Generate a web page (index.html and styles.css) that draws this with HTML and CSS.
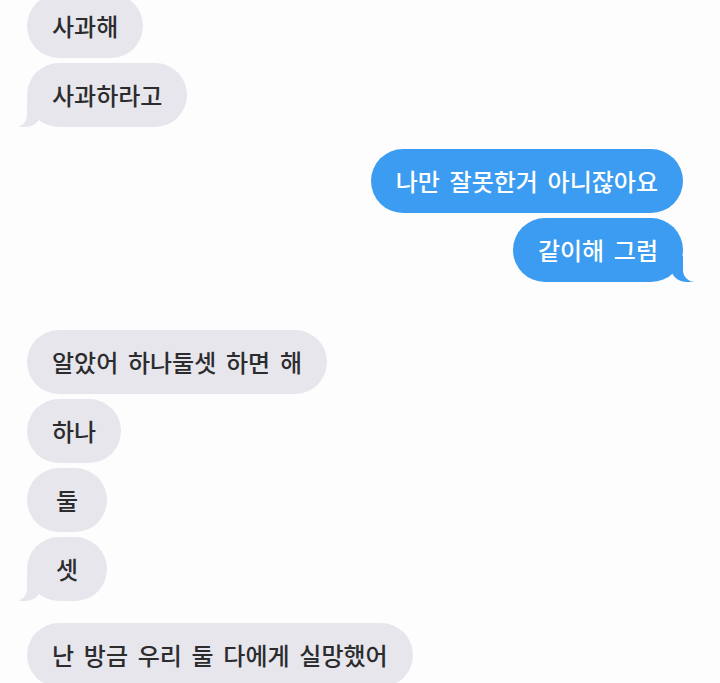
FILE: index.html
```html
<!DOCTYPE html>
<html lang="ko">
<head>
    <meta charset="UTF-8">
    <meta name="viewport" content="width=device-width, initial-scale=1.0">
    <title>메시지</title>
    <link rel="stylesheet" href="styles.css">
</head>
<body>
    <div class="chat">
        <div class="group received first">
            <p class="bubble">사과해</p>
            <p class="bubble tail">사과하라고</p>
        </div>
        <div class="group sent">
            <p class="bubble">나만 잘못한거 아니잖아요</p>
            <p class="bubble tail">같이해 그럼</p>
        </div>
        <div class="group received far">
            <p class="bubble">알았어 하나둘셋 하면 해</p>
            <p class="bubble">하나</p>
            <p class="bubble">둘</p>
            <p class="bubble tail">셋</p>
        </div>
        <div class="group received">
            <p class="bubble">난 방금 우리 둘 다에게 실망했어</p>
        </div>
    </div>
</body>
</html>
```

FILE: styles.css
```css
* {
    margin: 0;
    padding: 0;
    box-sizing: border-box;
}
body {
    background-color: #fdfdfd;
    font-family: "Noto Sans CJK KR", "Noto Sans", sans-serif;
    overflow: hidden;
}
.chat {
    padding: 0 37px 0 27px;
    display: flex;
    flex-direction: column;
    gap: 22px;
}
.group {
    display: flex;
    flex-direction: column;
    gap: 5px;
}
.group.first {
    margin-top: -6px;
}
.group.far {
    margin-top: 26px;
}
.received {
    align-items: flex-start;
}
.sent {
    align-items: flex-end;
}
.bubble {
    position: relative;
    min-width: 80px;
    padding: 17px 25px;
    font-size: 24px;
    font-weight: 500;
    line-height: 30px;
    word-spacing: 3px;
    text-align: center;
    border-radius: 32px;
    white-space: nowrap;
}
.received .bubble {
    background-color: #e7e6ed;
    color: #2c2c2e;
}
.sent .bubble {
    background-color: #3b9cf1;
    color: #fff;
}

/* little tail under the last bubble of a group */
.tail::before,
.tail::after {
    content: "";
    position: absolute;
    bottom: 0;
    height: 26px;
}
.received .tail::before {
    left: -8px;
    width: 22px;
    background-color: #e7e6ed;
    border-bottom-right-radius: 16px 14px;
}
.received .tail::after {
    left: -26px;
    width: 26px;
    background-color: #fdfdfd;
    border-bottom-right-radius: 12px;
}
.sent .tail::before {
    right: -12px;
    width: 24px;
    background-color: #3b9cf1;
    border-bottom-left-radius: 16px 14px;
}
.sent .tail::after {
    right: -26px;
    width: 26px;
    background-color: #fdfdfd;
    border-bottom-left-radius: 12px;
}
```
